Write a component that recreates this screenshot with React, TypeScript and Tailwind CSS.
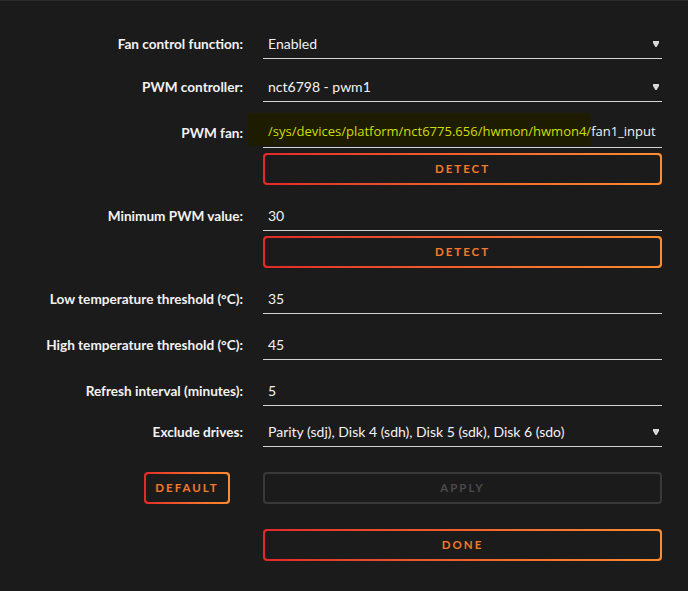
import { ReactNode } from 'react'

const font = { fontFamily: 'Lato, "Noto Sans", sans-serif' }
const pathFont = { fontFamily: '"Open Sans", "Noto Sans", sans-serif' }

function Row({ label, children, className = '' }: { label?: string; children: ReactNode; className?: string }) {
  return (
    <div className={`flex ${className}`}>
      <div className="w-[243px] shrink-0 flex items-center justify-end text-[13.6px] font-bold text-[#f2f2f2]">
        {label}
      </div>
      <div className="ml-[20px] w-[399px]">{children}</div>
    </div>
  )
}

function Field({ value, select = false }: { value: ReactNode; select?: boolean }) {
  return (
    <div className="h-[29px] flex items-center justify-between border-b border-[#d4d4d4] pl-[5px] pr-[3px] pb-[2px] text-[14px] text-[#f2f2f2]">
      <span>{value}</span>
      {select && (
        <svg width="6" height="7" viewBox="0 0 6 7" className="mt-[2px]">
          <path d="M0 0h6v2L3.6 6h-1.2L0 2z" fill="#d8d8d8" />
        </svg>
      )}
    </div>
  )
}

function GradButton({ label, className = '' }: { label: string; className?: string }) {
  return (
    <div className={`rounded-[4px] bg-gradient-to-r from-[#e22828] to-[#ff8c2f] p-[2px] ${className}`}>
      <div className="h-full rounded-[3px] bg-[#1c1b1c] flex items-center justify-center">
        <span className="text-[11.5px] font-bold tracking-[2px] text-[#f47a2a]">{label}</span>
      </div>
    </div>
  )
}

export default function App() {
  return (
    <div className="w-[688px] h-[591px] bg-[#1c1b1c] border-t border-[#2c2b2c] pt-[29px]" style={font}>
      <Row label="Fan control function:">
        <Field value="Enabled" select />
      </Row>
      <Row label="PWM controller:" className="mt-[14px]">
        <Field value="nct6798 - pwm1" select />
      </Row>
      <Row label="PWM fan:" className="mt-[17px]">
        <div className="h-[29px] border-b border-[#d4d4d4] pl-[5px] pb-[3px] flex items-center text-[13px]" style={pathFont}>
          <span className="relative">
            <span className="absolute left-[-20px] right-0 top-[-9px] bottom-[-5px] bg-[#1e1c00]" />
            <span className="relative text-[#cfdc00]">/sys/devices/platform/nct6775.656/hwmon/hwmon4/</span>
          </span>
          <span className="text-[#f2f2f2]">fan1_input</span>
        </div>
      </Row>
      <Row className="mt-[5px]">
        <GradButton label="DETECT" className="h-[32px]" />
      </Row>
      <Row label="Minimum PWM value:" className="mt-[17px]">
        <Field value="30" />
      </Row>
      <Row className="mt-[5px]">
        <GradButton label="DETECT" className="h-[32px]" />
      </Row>
      <Row label="Low temperature threshold (°C):" className="mt-[17px]">
        <Field value="35" />
      </Row>
      <Row label="High temperature threshold (°C):" className="mt-[17px]">
        <Field value="45" />
      </Row>
      <Row label="Refresh interval (minutes):" className="mt-[17px]">
        <Field value="5" />
      </Row>
      <Row label="Exclude drives:" className="mt-[12px]">
        <Field value="Parity (sdj), Disk 4 (sdh), Disk 5 (sdk), Disk 6 (sdo)" select />
      </Row>
      <div className="mt-[25px] flex">
        <div className="w-[243px] shrink-0 flex justify-end pr-[13px]">
          <GradButton label="DEFAULT" className="h-[32px] w-[86px]" />
        </div>
        <div className="ml-[20px] w-[399px] h-[32px] rounded-[4px] border-2 border-[#3a393a] flex items-center justify-center">
          <span className="text-[11.5px] font-bold tracking-[2px] text-[#4a494a]">APPLY</span>
        </div>
      </div>
      <Row className="mt-[25px]">
        <GradButton label="DONE" className="h-[32px]" />
      </Row>
    </div>
  )
}
